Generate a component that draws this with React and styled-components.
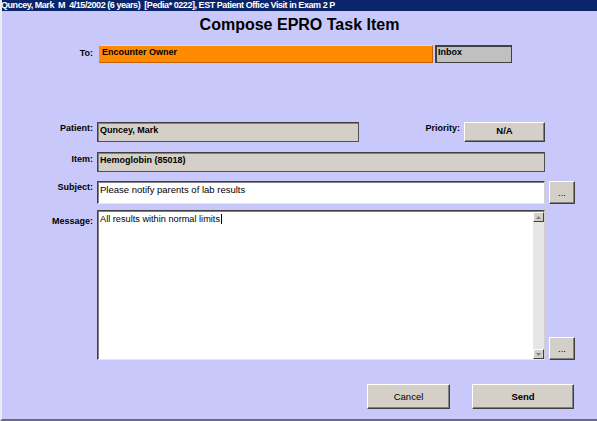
import React from 'react';
import styled, { createGlobalStyle } from 'styled-components';

const GlobalStyle = createGlobalStyle`
  html, body {
    margin: 0;
    padding: 0;
    background: #c8c8fa;
  }
  * {
    box-sizing: border-box;
  }
`;

const Window = styled.div`
  width: 597px;
  height: 421px;
  background: #c8c8fa;
  border-left: 2px solid #ececf4;
  border-bottom: 2px solid #6a6a80;
  font-family: 'Liberation Sans', Arial, sans-serif;
  color: #000;
  display: flex;
  flex-direction: column;
  overflow: hidden;
`;

const TitleBar = styled.div`
  height: 11px;
  margin-left: -2px;
  background: #0a246a;
  color: #fff;
  font-size: 9px;
  font-weight: 700;
  letter-spacing: -0.45px;
  line-height: 11px;
  padding-left: 1px;
  white-space: nowrap;
  overflow: hidden;
`;

const Heading = styled.h1`
  margin: 5px 0 0;
  height: 18px;
  font-size: 16px;
  line-height: 18px;
  font-weight: 700;
  text-align: center;
`;

const Row = styled.div`
  display: grid;
  grid-template-columns: 91px 448px 26px;
  column-gap: 4px;
  margin-top: ${(p) => p.$top}px;
  height: ${(p) => p.$h}px;
`;

const Label = styled.div`
  align-self: start;
  text-align: right;
  font-size: 9px;
  font-weight: 700;
  line-height: 11px;
  padding-top: ${(p) => p.$pt || 0}px;
`;

const Pair = styled.div`
  display: flex;
  gap: 2px;
  padding-left: 2px;
`;

const OrangeField = styled.div`
  width: 334px;
  background: #ff8a00;
  border-top: 1px solid #e8d8c0;
  border-left: 1px solid #b0a090;
  border-right: 1px solid #c06000;
  border-bottom: 1px solid #c06000;
  font-size: 9px;
  font-weight: 700;
  line-height: 11px;
  padding: 1px 2px;
`;

const InboxField = styled.div`
  width: 77px;
  background: #c0c0c0;
  border: 1px solid #404040;
  border-top-width: 2px;
  border-left-width: 2px;
  font-size: 9px;
  font-weight: 700;
  line-height: 11px;
  padding: 0 1px;
`;

const Field = styled.div`
  width: ${(p) => (p.$w ? `${p.$w}px` : 'auto')};
  background: ${(p) => (p.$white ? '#fff' : '#d4d0c8')};
  border-top: 1px solid #404040;
  border-left: 1px solid #404040;
  border-right: 1px solid ${(p) => (p.$white ? '#d4d0c8' : '#505050')};
  border-bottom: 1px solid ${(p) => (p.$white ? '#e8e8e8' : '#505050')};
  box-shadow: inset 1px 1px 0 #808080;
  font-size: ${(p) => (p.$bold ? 9 : 9.5)}px;
  font-weight: ${(p) => (p.$bold ? 700 : 400)};
  line-height: 11px;
  padding: 2px 2px;
  white-space: nowrap;
  overflow: hidden;
`;

const Split = styled.div`
  display: flex;
  align-items: stretch;
`;

const Spacer = styled.div`
  flex: 1;
`;

const Button = styled.button`
  font-family: 'Liberation Sans', Arial, sans-serif;
  font-size: 9.5px;
  font-weight: ${(p) => (p.$bold ? 700 : 400)};
  color: #000;
  background: #d4d0c8;
  border-top: 1px solid #fff;
  border-left: 1px solid #fff;
  border-right: 1px solid #404040;
  border-bottom: 1px solid #404040;
  box-shadow: inset -1px -1px 0 #808080;
  width: ${(p) => p.$w}px;
  height: ${(p) => p.$h}px;
  padding: ${(p) => (p.$topText ? '2px 0 0' : '0')};
  line-height: ${(p) => (p.$topText ? '11px' : 'normal')};
  display: flex;
  align-items: ${(p) => (p.$topText ? 'flex-start' : 'center')};
  justify-content: center;
  cursor: pointer;
`;

const PriorityLabel = styled(Label)`
  margin-right: 4px;
`;

const MessageBox = styled.div`
  display: flex;
  background: #fff;
  border-top: 1px solid #404040;
  border-left: 1px solid #404040;
  border-right: 1px solid #d4d0c8;
  border-bottom: 1px solid #e8e8e8;
  box-shadow: inset 1px 1px 0 #808080;
`;

const MessageText = styled.div`
  flex: 1;
  font-size: 9.2px;
  line-height: 11px;
  padding: 3px 2px;
`;

const Caret = styled.span`
  display: inline-block;
  width: 1px;
  height: 10px;
  background: #000;
  vertical-align: -2px;
  margin-left: 1px;
`;

const ScrollBar = styled.div`
  width: 11px;
  display: flex;
  flex-direction: column;
  justify-content: space-between;
  background: #e6e6e6;
  margin: 1px 0 0;
`;

const ScrollButton = styled.div`
  height: 10px;
  background: #d4d0c8;
  border-top: 1px solid #fff;
  border-left: 1px solid #fff;
  border-right: 1px solid #404040;
  border-bottom: 1px solid #404040;
  display: flex;
  align-items: center;
  justify-content: center;
`;

const Side = styled.div`
  display: flex;
  flex-direction: column;
  justify-content: ${(p) => p.$justify || 'center'};
`;

const Footer = styled.div`
  display: flex;
  justify-content: flex-end;
  gap: 22px;
  margin-top: 24px;
  padding-right: 23px;
`;

const Arrow = ({ down }) => (
  <svg width="5" height="3" viewBox="0 0 5 3">
    <path d={down ? 'M0 0h5L2.5 3z' : 'M0 3h5L2.5 0z'} fill="#808080" />
  </svg>
);

export default function App() {
  return (
    <>
      <GlobalStyle />
      <Window>
        <TitleBar>
          Quncey, Mark&nbsp; M&nbsp; 4/15/2002 (6 years)&nbsp; [Pedia* 0222], EST Patient Office Visit in Exam 2 P
        </TitleBar>
        <Heading>Compose EPRO Task Item</Heading>

        <Row $top={11} $h={18}>
          <Label $pt={3}>To:</Label>
          <Pair>
            <OrangeField>Encounter Owner</OrangeField>
            <InboxField>Inbox</InboxField>
          </Pair>
        </Row>

        <Row $top={59} $h={20}>
          <Label $pt={1}>Patient:</Label>
          <Split>
            <Field $w={262} $bold>Quncey, Mark</Field>
            <Spacer />
            <PriorityLabel $pt={1}>Priority:</PriorityLabel>
            <Button $w={81} $h={20} $bold $topText>N/A</Button>
          </Split>
        </Row>

        <Row $top={10} $h={20}>
          <Label $pt={2}>Item:</Label>
          <Field $bold>Hemoglobin (85018)</Field>
        </Row>

        <Row $top={9} $h={20}>
          <Label $pt={1}>Subject:</Label>
          <Field $white>Please notify parents of lab results</Field>
          <Side>
            <Button $w={26} $h={23}>...</Button>
          </Side>
        </Row>

        <Row $top={9} $h={150}>
          <Label $pt={6}>Message:</Label>
          <MessageBox>
            <MessageText>
              All results within normal limits
              <Caret />
            </MessageText>
            <ScrollBar>
              <ScrollButton>
                <Arrow />
              </ScrollButton>
              <ScrollButton>
                <Arrow down />
              </ScrollButton>
            </ScrollBar>
          </MessageBox>
          <Side $justify="flex-end">
            <Button $w={26} $h={23}>...</Button>
          </Side>
        </Row>

        <Footer>
          <Button $w={83} $h={25}>Cancel</Button>
          <Button $w={102} $h={25} $bold>Send</Button>
        </Footer>
      </Window>
    </>
  );
}
